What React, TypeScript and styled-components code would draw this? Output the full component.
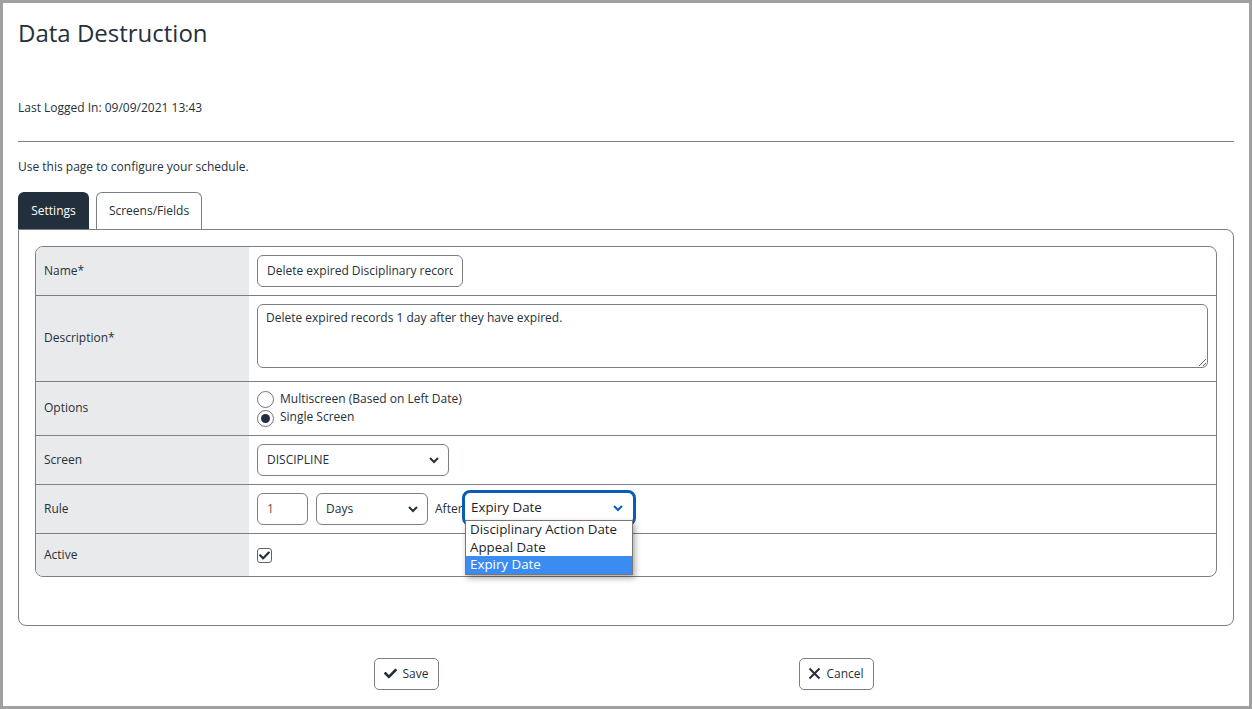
import React from "react";
import styled, { createGlobalStyle } from "styled-components";
import { FaCheck } from "react-icons/fa";

const Global = createGlobalStyle`
  html, body { margin: 0; padding: 0; background: #fff; }
  body { font-family: "Open Sans", "Noto Sans", sans-serif; font-size: 12px; color: #25303b; }
  * { box-sizing: border-box; }
`;

const Frame = styled.div`
  width: 1252px;
  height: 709px;
  border: 3px solid #a0a0a0;
  padding: 0 15px;
  overflow: hidden;
`;
const Title = styled.h1`
  margin: 0;
  padding-top: 13px;
  height: 64px;
  font-size: 24px;
  line-height: 34px;
  font-weight: 400;
  color: #25303b;
`;
const Meta = styled.p`
  margin: 0;
  padding-top: 32px;
  height: 74px;
  line-height: 18px;
`;
const Rule = styled.hr`
  margin: 0;
  border: 0;
  border-top: 1px solid #7b8088;
`;
const Intro = styled.p`
  margin: 0;
  padding-top: 16px;
  height: 50px;
  line-height: 18px;
`;
const Tabs = styled.div`
  display: flex;
  gap: 7px;
  height: 37px;
`;
const Tab = styled.div<{ $active?: boolean }>`
  display: flex;
  align-items: center;
  justify-content: center;
  width: ${(p) => (p.$active ? "71px" : "106px")};
  height: 37px;
  padding-bottom: 1px;
  border: 1px solid ${(p) => (p.$active ? "#222f3c" : "#7b8088")};
  border-bottom: 0;
  border-radius: 6px 6px 0 0;
  background: ${(p) => (p.$active ? "#222f3c" : "#fff")};
  color: ${(p) => (p.$active ? "#fff" : "#25303b")};
`;
const Panel = styled.div`
  height: 397px;
  padding: 16px;
  border: 1px solid #7b8088;
  border-radius: 0 8px 8px 8px;
`;
const FormTable = styled.div`
  height: 331px;
  border: 1px solid #7b8088;
  border-radius: 8px;
`;
const Row = styled.div<{ $h: number; $last?: boolean }>`
  display: grid;
  grid-template-columns: 213px 1fr;
  height: ${(p) => p.$h}px;
  border-bottom: ${(p) => (p.$last ? "0" : "1px solid #7b8088")};
`;
const Label = styled.div<{ $first?: boolean; $last?: boolean }>`
  display: flex;
  align-items: center;
  padding: 0 0 2px 8px;
  background: #e9eaec;
  border-radius: ${(p) => (p.$first ? "7px 0 0 0" : p.$last ? "0 0 0 7px" : "0")};
`;
const Field = styled.div`
  display: flex;
  align-items: center;
  padding: 0 8px;
  min-width: 0;
`;
const AreaField = styled(Field)`
  align-items: flex-start;
  padding-top: 8px;
`;
const TextInput = styled.input`
  width: 206px;
  height: 32px;
  padding: 0 9px 2px;
  border: 1px solid #7b8088;
  border-radius: 6px;
  font: inherit;
  color: #25303b;
  background: #fff;
  outline: none;
`;
const NumberInput = styled(TextInput)`
  width: 51px;
  color: #7a4a48;
`;
const TextArea = styled.textarea`
  display: block;
  width: 951px;
  height: 64px;
  padding: 4px 8px;
  border: 1px solid #7b8088;
  border-radius: 6px;
  font: inherit;
  line-height: 18px;
  color: #25303b;
  resize: vertical;
  outline: none;
`;
const Radios = styled.div`
  display: flex;
  flex-direction: column;
  gap: 1px;
`;
const RadioLine = styled.div`
  display: flex;
  align-items: center;
  gap: 6px;
  height: 18px;
`;
const RadioText = styled.span<{ $second?: boolean }>`
  padding-bottom: ${(p) => (p.$second ? "4px" : "2px")};
`;
const RadioDot = styled.span<{ $on?: boolean }>`
  display: flex;
  align-items: center;
  justify-content: center;
  width: 17px;
  height: 17px;
  border: 1px solid #6f747b;
  border-radius: 50%;
  background: #fff;
  &::after {
    content: "";
    display: ${(p) => (p.$on ? "block" : "none")};
    width: 9px;
    height: 9px;
    border-radius: 50%;
    background: #222f3c;
  }
`;
const Select = styled.div<{ $w: number }>`
  display: flex;
  align-items: center;
  justify-content: space-between;
  width: ${(p) => p.$w}px;
  height: 32px;
  padding: 0 9px 2px 9px;
  border: 1px solid #7b8088;
  border-radius: 6px;
  background: #fff;
`;
const RuleLine = styled.div`
  display: flex;
  align-items: center;
`;
const Days = styled(Select)`
  margin-left: 8px;
`;
const After = styled.span`
  margin-left: 7px;
  width: 27px;
  padding-bottom: 2px;
  overflow: hidden;
  white-space: nowrap;
`;
const Combo = styled.div`
  position: relative;
  width: 174px;
  height: 36px;
  margin-top: -2px;
  font-size: 13.33px;
  color: #1f1f1f;
`;
const ComboHead = styled.div`
  display: flex;
  align-items: center;
  justify-content: space-between;
  height: 36px;
  padding: 0 10px 2px 6px;
  border: 3px solid #0a5cb8;
  border-radius: 8px;
  background: #fff;
`;
const ComboList = styled.ul`
  position: absolute;
  left: 3px;
  top: 30px;
  width: 168px;
  margin: 0;
  padding: 0;
  list-style: none;
  background: #fff;
  border: 1px solid #767676;
  box-shadow: 2px 3px 6px rgba(0, 0, 0, 0.35);
  z-index: 3;
`;
const ComboItem = styled.li<{ $on?: boolean }>`
  height: 17.5px;
  line-height: 17.5px;
  padding-left: 4px;
  white-space: nowrap;
  background: ${(p) => (p.$on ? "#3b8cf0" : "transparent")};
  color: ${(p) => (p.$on ? "#fff" : "#1f1f1f")};
`;
const Check = styled.span`
  display: flex;
  align-items: center;
  justify-content: center;
  width: 15px;
  height: 15px;
  border: 1px solid #5f646b;
  border-radius: 3px;
  color: #222f3c;
`;
const Actions = styled.div`
  display: flex;
  justify-content: center;
  gap: 360px;
  padding: 32px 4px 0 0;
`;
const Button = styled.div<{ $cancel?: boolean }>`
  display: flex;
  align-items: center;
  gap: 5px;
  height: 32px;
  padding: ${(p) => (p.$cancel ? "0 9px 2px 8px" : "0 10px 2px 9px")};
  border: 1px solid #7b8088;
  border-radius: 5px;
  background: #fff;
`;
const ChevronSvg = styled.svg`
  margin-top: 2px;
`;

const Chevron = ({ color = "#25303b", weight = 2 }: { color?: string; weight?: number }) => (
  <ChevronSvg width="10" height="7" viewBox="0 0 10 7" fill="none">
    <path d="M1 1l4 4 4-4" stroke={color} strokeWidth={weight} />
  </ChevronSvg>
);

const Cross = () => (
  <svg width="13" height="13" viewBox="0 0 13 13" fill="none">
    <path d="M1.5 1.5l10 10M11.5 1.5l-10 10" stroke="#25303b" strokeWidth="2" />
  </svg>
);

export default function App() {
  return (
    <>
      <Global />
      <Frame>
        <Title>Data Destruction</Title>
        <Meta>Last Logged In: 09/09/2021 13:43</Meta>
        <Rule />
        <Intro>Use this page to configure your schedule.</Intro>
        <Tabs>
          <Tab $active>Settings</Tab>
          <Tab>Screens/Fields</Tab>
        </Tabs>
        <Panel>
          <FormTable>
            <Row $h={49}>
              <Label $first>Name*</Label>
              <Field>
                <TextInput readOnly value="Delete expired Disciplinary records" />
              </Field>
            </Row>
            <Row $h={86}>
              <Label>Description*</Label>
              <AreaField>
                <TextArea readOnly value="Delete expired records 1 day after they have expired." />
              </AreaField>
            </Row>
            <Row $h={54}>
              <Label>Options</Label>
              <Field>
                <Radios>
                  <RadioLine>
                    <RadioDot />
                    <RadioText>Multiscreen (Based on Left Date)</RadioText>
                  </RadioLine>
                  <RadioLine>
                    <RadioDot $on />
                    <RadioText $second>Single Screen</RadioText>
                  </RadioLine>
                </Radios>
              </Field>
            </Row>
            <Row $h={49}>
              <Label>Screen</Label>
              <Field>
                <Select $w={192}>
                  DISCIPLINE
                  <Chevron />
                </Select>
              </Field>
            </Row>
            <Row $h={49}>
              <Label>Rule</Label>
              <Field>
                <RuleLine>
                  <NumberInput readOnly value="1" />
                  <Days $w={112}>
                    Days
                    <Chevron />
                  </Days>
                  <After>After</After>
                  <Combo>
                    <ComboHead>
                      Expiry Date
                      <Chevron color="#0a5cb8" />
                    </ComboHead>
                    <ComboList>
                      <ComboItem>Disciplinary Action Date</ComboItem>
                      <ComboItem>Appeal Date</ComboItem>
                      <ComboItem $on>Expiry Date</ComboItem>
                    </ComboList>
                  </Combo>
                </RuleLine>
              </Field>
            </Row>
            <Row $h={42} $last>
              <Label $last>Active</Label>
              <Field>
                <Check>
                  <FaCheck size={11} />
                </Check>
              </Field>
            </Row>
          </FormTable>
        </Panel>
        <Actions>
          <Button>
            <FaCheck size={13} />
            Save
          </Button>
          <Button $cancel>
            <Cross />
            Cancel
          </Button>
        </Actions>
      </Frame>
    </>
  );
}
